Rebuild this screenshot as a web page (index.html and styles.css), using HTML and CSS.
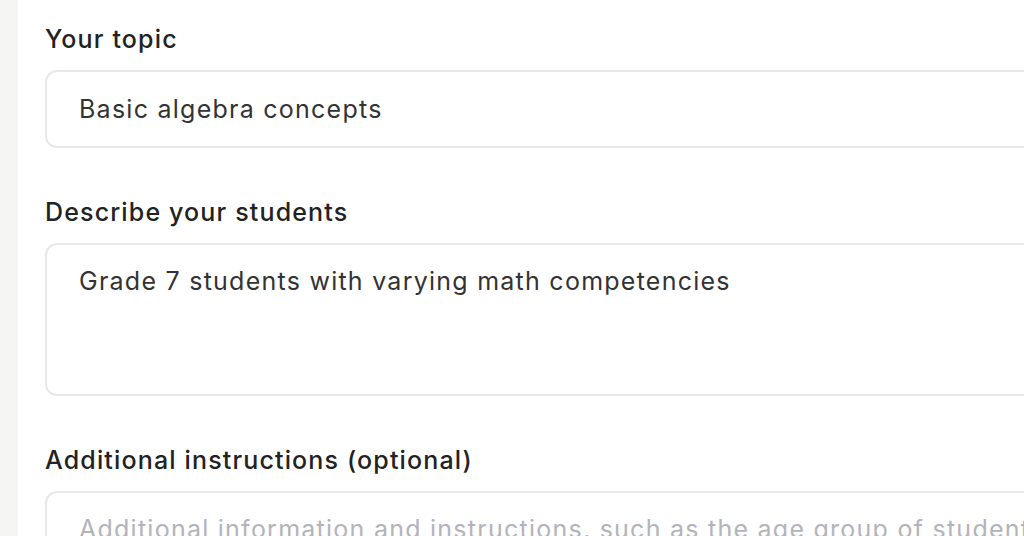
FILE: index.html
```html
<!DOCTYPE html>
<html lang="en">
<head>
    <meta charset="UTF-8">
    <meta name="viewport" content="width=device-width, initial-scale=1.0">
    <title>Lesson planner</title>
    <link rel="stylesheet" href="styles.css">
</head>
<body>

    <div class="layout">
        <div class="sidebar"></div>

        <div class="main">
            <form class="planner-form">
                <div class="field">
                    <label for="topic">Your topic</label>
                    <input type="text" id="topic" name="topic" value="Basic algebra concepts">
                </div>

                <div class="field">
                    <label for="students">Describe your students</label>
                    <textarea id="students" name="students">Grade 7 students with varying math competencies</textarea>
                </div>

                <div class="field">
                    <label for="extra">Additional instructions (optional)</label>
                    <textarea id="extra" name="extra" placeholder="Additional information and instructions, such as the age group of students, learning objectives, etc."></textarea>
                </div>
            </form>
        </div>
    </div>

</body>
</html>
```

FILE: styles.css
```css
body {
    font-family: Inter, "Noto Sans", Arial, sans-serif;
    background-color: #ffffff;
    margin: 0;
    padding: 0;
    overflow: hidden;
    height: 536px;
}
.layout {
    display: flex;
    height: 536px;
}
.sidebar {
    width: 18px;
    flex-shrink: 0;
    background-color: #f5f5f4;
}
.main {
    flex: 1;
    padding: 23px 0 0 27px;
    overflow: hidden;
}
.planner-form {
    width: 1100px;
}
.field {
    margin-bottom: 48px;
}
.field label {
    display: block;
    font-size: 25px;
    line-height: 32px;
    font-weight: 500;
    letter-spacing: 1.15px;
    color: #222222;
    margin-bottom: 15px;
}
.field input[type="text"],
.field textarea {
    display: block;
    width: 100%;
    box-sizing: border-box;
    font-family: inherit;
    font-size: 25px;
    line-height: 32px;
    letter-spacing: 1.25px;
    color: #333333;
    background-color: #ffffff;
    border: 2px solid #e8e8e8;
    border-radius: 12px;
    padding: 20px 32px;
    outline: none;
}
.field input[type="text"] {
    height: 78px;
}
.field textarea {
    height: 153px;
    resize: none;
}
.field textarea::placeholder {
    color: #b3b3bb;
}
```
